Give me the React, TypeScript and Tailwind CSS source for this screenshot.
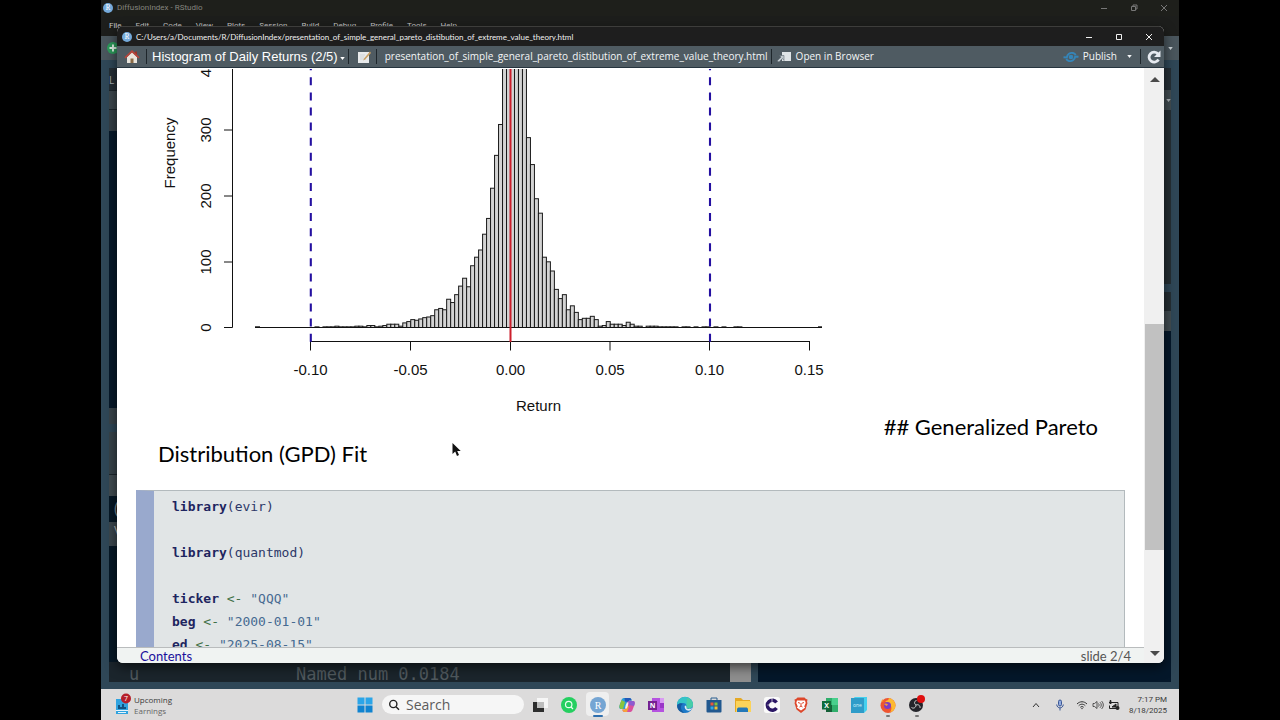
import type { ReactNode } from "react";

const MENUS = [
  "File",
  "Edit",
  "Code",
  "View",
  "Plots",
  "Session",
  "Build",
  "Debug",
  "Profile",
  "Tools",
  "Help",
];

const FILE_NAME =
  "presentation_of_simple_general_pareto_distibution_of_extreme_value_theory.html";

// Bin counts, 0.002 wide. The list starts at FIRST_BIN * 0.002.
const FIRST_BIN = -49;
const COUNTS = [
  1, 0, 1, 1, 1, 2, 1, 1, 1, 1, 2, 2, 1, 3, 3, 1, 2, 3, 5, 5, 5, 2, 7, 9, 12,
  11, 13, 15, 16, 18, 27, 29, 27, 43, 38, 50, 63, 75, 62, 94, 107, 118, 142,
  166, 212, 262, 309, 450, 450, 450, 450, 450, 450, 289, 248, 196, 174, 107,
  100, 86, 58, 44, 50, 27, 33, 23, 12, 14, 14, 17, 12, 2, 3, 9, 5, 5, 5, 3, 8,
  5, 2, 2, 0, 2, 2, 2, 1, 1, 1, 1, 1, 0, 1, 1, 0, 1, 0, 1, 1, 0, 1, 0, 1, 0, 0,
  1, 1,
];

const ZERO_X = 510.5;
const ZERO_Y = 327.5;
const BIN_W = 3.99;
const PX_PER_COUNT = 0.657;

function Histogram() {
  return (
    <svg
      viewBox="117 67 740 373"
      className="h-[373px] w-[740px] shrink-0"
      fontFamily='"Liberation Sans", Arial, sans-serif'
      fontSize="15"
      role="img"
      aria-label="Histogram of daily returns"
    >
      <clipPath id="plot">
        <rect x="117" y="69" width="740" height="374" />
      </clipPath>
      <g clipPath="url(#plot)">
        <g fill="#d3d3d3" stroke="#1a1a1a" strokeWidth="1">
          {COUNTS.map((count, i) =>
            count > 0 ? (
              <rect
                key={i}
                x={ZERO_X + (FIRST_BIN + i) * BIN_W}
                y={ZERO_Y - count * PX_PER_COUNT}
                width={BIN_W}
                height={count * PX_PER_COUNT}
              />
            ) : null,
          )}
        </g>
        <g stroke="#111" strokeWidth="1" fill="none">
          <path d="M255 327.5H822" />
          <path d="M255 326.8h5M818 326.8h4" />
          <path d="M232.5 60V327.5M224 130h8.500M224 196h8.500M224 262h8.500M224 327.500h8.500" />
          <path d="M310.500 341.500H809.500M310.500 341v9.500M410.500 341v9.500M510.500 341v9.500M610 341v9.500M709.500 341v9.500M809.500 341v9.500" />
        </g>
        <path d="M510.500 60V342" stroke="#cc1f2c" strokeWidth="2" />
        <path
          d="M310.800 341.700V60M710 341.700V60"
          stroke="#2410a0"
          strokeWidth="2.100"
          strokeDasharray="8 7.080"
        />
        <g textAnchor="middle" fill="#111">
          <text x="310.500" y="374.500">-0.10</text>
          <text x="410.500" y="374.500">-0.05</text>
          <text x="510.500" y="374.500">0.00</text>
          <text x="610" y="374.500">0.05</text>
          <text x="709.500" y="374.500">0.10</text>
          <text x="809" y="374.500">0.15</text>
          <text x="538.500" y="411">Return</text>
          <text transform="translate(211 327.500) rotate(-90)">0</text>
          <text transform="translate(211 262) rotate(-90)">100</text>
          <text transform="translate(211 196) rotate(-90)">200</text>
          <text transform="translate(211 130) rotate(-90)">300</text>
          <text transform="translate(211 73) rotate(-90)">4</text>
          <text transform="translate(174.500 153) rotate(-90)">Frequency</text>
        </g>
      </g>
    </svg>
  );
}

function RLogo({ className = "" }: { className?: string }) {
  return (
    <span
      className={`flex shrink-0 items-center justify-center rounded-full bg-[#75aadb] font-serif text-white ${className}`}
    >
      R
    </span>
  );
}

function Separator() {
  return <span className="h-[15px] w-px shrink-0 bg-[#1e262b]" />;
}

function Caret({ className = "" }: { className?: string }) {
  return (
    <svg viewBox="0 0 6 4" className={`h-[3px] w-[5px] ${className}`} fill="currentColor">
      <path d="M0 0h6L3 4z" />
    </svg>
  );
}

function WindowButtons({ restore = false }: { restore?: boolean }) {
  return (
    <div className="ml-auto flex items-center">
      <button aria-label="Minimize" className="flex w-[30px] justify-center">
        <svg viewBox="0 0 8 8" className="size-2" stroke="currentColor" fill="none">
          <path d="M1 4.500h6" />
        </svg>
      </button>
      <button aria-label="Maximize" className="flex w-[30px] justify-center">
        <svg viewBox="0 0 8 8" className="size-2" stroke="currentColor" fill="none">
          {restore ? (
            <path d="M1.500 2.500h4v4h-4zM3 2.500V1h4v4H5.500" />
          ) : (
            <path d="M1.500 1.500h5v5h-5z" />
          )}
        </svg>
      </button>
      <button aria-label="Close" className="flex w-[30px] justify-center">
        <svg viewBox="0 0 8 8" className="size-2" stroke="currentColor" fill="none">
          <path d="M1 1l6 6M7 1L1 7" />
        </svg>
      </button>
    </div>
  );
}

function RStudioBackdrop() {
  return (
    <div className="flex min-h-0 flex-1 flex-col bg-[#2f4757]">
      <div className="flex h-4 items-center bg-[#1e1f1b] pl-[2px] font-['Roboto',sans-serif] text-[8px] text-[#85857f]">
        <RLogo className="mr-1 size-[10px] text-[8px]" />
        <span>DiffusionIndex - RStudio</span>
        <div className="ml-auto text-[#777]">
          <WindowButtons restore />
        </div>
      </div>
      <div className="flex h-5 items-center gap-[14px] bg-[#1d1e1c] pl-2 font-['Roboto',sans-serif] text-[8px] text-[#c9c9c9]">
        {MENUS.map((menu) => (
          <button key={menu}>{menu}</button>
        ))}
      </div>
      <div className="flex h-6 items-center bg-[#4a565d] pl-[6px]">
        <svg viewBox="0 0 12 12" className="size-3">
          <circle cx="6" cy="6" r="6" fill="#2c9b5b" />
          <path d="M6 2.500v7M2.500 6h7" stroke="#dff2e6" strokeWidth="2" />
        </svg>
        <Caret className="mr-[6px] ml-auto text-[#cfd6da]" />
      </div>
      <div className="flex min-h-0 flex-1 gap-[7px] px-2 pt-2 pb-[7px]">
        <div className="flex flex-[643] flex-col bg-[#061826]">
          <div className="h-[22px] bg-[#252f36] pt-1 text-[10px] leading-4 text-[#aab1b5]">L</div>
          <div className="h-5 border-y border-[#1c262c] bg-[#3c474d]" />
          <div className="h-[21px] bg-[#343f46]" />
          <div className="h-[277px] bg-[#07192a]" />
          <div className="h-4 bg-[#39444b]" />
          <div className="h-2 bg-[#2f4757]" />
          <div className="h-[42px] bg-[#37434a]" />
          <div className="h-[22px] border-t border-[#1c262c] bg-[#414c51]" />
          <div className="h-[26px] pl-[5px] text-[16px] leading-6 text-[#7d8890]">(</div>
          <div className="h-6 bg-[#3b474e] pl-[5px] text-[13px] leading-4 text-[#b0b6ba]">V</div>
          <div className="mt-auto flex h-5 bg-[#1b252c]">
            <div className="flex flex-1 items-center self-end font-['DejaVu_Sans_Mono',monospace] text-[17px] leading-4 text-[#50595e]">
              <span className="w-[187px] pl-5">u</span>
              <span>Named num 0.0184</span>
            </div>
            <span className="h-full w-[21px] bg-[#8e8e8e]" />
          </div>
        </div>
        <div className="flex flex-[413] flex-col bg-[#04172a]">
          <div className="h-[22px] bg-[#252f36]" />
          <div className="flex h-5 items-center justify-end bg-[#414c51] text-[#aab1b5]">
            <Caret />
          </div>
          <div className="h-[174px] bg-[#252f34]" />
          <div className="h-2 bg-[#2f4757]" />
          <div className="h-[19px] bg-[#252f34]" />
          <div className="h-5 bg-[#414c51]" />
        </div>
      </div>
    </div>
  );
}

function PublishIcon() {
  return (
    <svg viewBox="0 0 16 12" className="h-3 w-4" fill="none" stroke="#3585b8">
      <circle cx="8" cy="6" r="2.300" fill="#3585b8" stroke="none" />
      <path d="M.500 6.200l3.300.300C4.300 3 7 1.300 10 2c1.400.400 2.200 1.100 2.700 2" strokeWidth="1.900" />
      <path d="M15.500 5.800l-3.300-.300C11.700 9 9 10.700 6 10c-1.400-.400-2.200-1.100-2.700-2" strokeWidth="1.900" />
    </svg>
  );
}

function Code({ name, value }: { name: string; value: string }) {
  return (
    <>
      <b className="text-[#1e2560]">{name}</b> <span className="text-[#3f7047]">&lt;-</span>{" "}
      <span className="text-[#466a91]">"{value}"</span>
      {"\n"}
    </>
  );
}

function Call({ arg }: { arg: string }) {
  return (
    <>
      <b className="text-[#1e2560]">library</b>({arg}){"\n\n"}
    </>
  );
}

function PresentationWindow() {
  return (
    <section className="absolute top-[26px] right-[15px] bottom-[26px] left-4 flex flex-col overflow-hidden rounded-md bg-white shadow-[0_4px_12px_rgba(0,0,0,0.6)]">
      <header className="flex h-5 shrink-0 items-center border-t border-[#3d3d3b] bg-[#1e1e1e] pl-[5px] font-['Lato',sans-serif] text-[8px] text-[#f0f0f0]">
        <RLogo className="mr-1 size-[10px] text-[8px]" />
        <span>C:/Users/a/Documents/R/DiffusionIndex/{FILE_NAME}</span>
        <WindowButtons />
      </header>

      <div className="flex h-[22px] shrink-0 items-center border-b border-[#26343e] bg-[#4f5b62] text-[10px] text-[#f4f6f7]">
        <button aria-label="Home" className="ml-[7px]">
          <svg viewBox="0 0 16 14" className="h-[14px] w-4">
            <path d="M3 7l5-5 5 5v6H3z" fill="#e9e4dc" />
            <path d="M6.500 8.500h3V13h-3z" fill="#8a6a45" />
            <path d="M11 1.500h2V5h-2z" fill="#9c3228" />
            <path d="M1 7.800L8 1.300l7 6.500" fill="none" stroke="#b5453c" strokeWidth="1.800" />
          </svg>
        </button>
        <span className="mr-[5px] ml-[6px] flex">
          <Separator />
        </span>
        <button className="flex items-center gap-[2px] font-['Liberation_Sans',Arial,sans-serif] text-[13px] leading-[18px] text-white">
          Histogram of Daily Returns (2/5)
          <Caret className="mt-1" />
        </button>
        <span className="mr-2 ml-[3px] flex">
          <Separator />
        </span>
        <button aria-label="Edit source">
          <svg viewBox="0 0 14 14" className="size-[14px]">
            <path d="M1 2h11v11H1z" fill="#e8eaeb" />
            <path d="M3 5h5M3 7h4M3 9h6" stroke="#d0d5d7" />
            <path d="M13 1.500L7 8.500l-.800 2 2-1L14 3z" fill="#c9a063" />
          </svg>
        </button>
        <span className="mr-2 ml-[5px] flex">
          <Separator />
        </span>
        <span>{FILE_NAME}</span>
        <span className="mr-[5px] ml-[3px] flex">
          <Separator />
        </span>
        <button className="flex items-center gap-[5px]">
          <svg viewBox="0 0 14 12" className="h-3 w-[14px]">
            <path d="M5 1h9v9H5z" fill="#dfe4e7" />
            <path d="M0 10l4-4-2-1.500h5v5L5.500 7.500 2 11z" fill="#c2cacf" stroke="#4f5b62" strokeWidth=".500" />
          </svg>
          Open in Browser
        </button>
        <button className="ml-auto flex items-center gap-1">
          <PublishIcon />
          Publish
          <Caret className="ml-[6px]" />
        </button>
        <span className="mr-[6px] ml-2 flex">
          <Separator />
        </span>
        <button aria-label="Refresh" className="mr-[3px]">
          <svg viewBox="0 0 14 14" className="size-[14px]" fill="none">
            <path d="M11.500 9.500A5 5 0 1 1 11 4" stroke="#e6eaf0" strokeWidth="2.800" />
            <path d="M13.500.500v6.500H7z" fill="#e6eaf0" />
          </svg>
        </button>
      </div>

      <div className="flex min-h-0 flex-1">
        <div className="flex min-w-0 flex-1 flex-col">
          <main className="min-h-0 flex-1 overflow-hidden font-['Lato',sans-serif] text-[22px] leading-[27px] text-black">
            <div className="-mt-px flex items-end justify-between pr-[46px]">
              <Histogram />
              <p className="whitespace-nowrap">## Generalized Pareto</p>
            </div>
            <p className="pl-[41px]">Distribution (GPD) Fit</p>
            <pre className="mt-[23px] mr-[19px] ml-[19px] border-t border-r border-l-[18px] border-t-[#b3babd] border-r-[#b3babd] border-l-[#99a9cd] bg-[#e1e5e6] pt-1 pb-6 pl-[18px] font-['DejaVu_Sans_Mono',monospace] text-[13px] leading-[23px] text-[#2c3768]">
              <Call arg="evir" />
              <Call arg="quantmod" />
              <Code name="ticker" value="QQQ" />
              <Code name="beg" value="2000-01-01" />
              <Code name="ed" value="2025-08-15" />
            </pre>
          </main>
          <footer className="flex h-4 shrink-0 items-center justify-between border-t border-[#b9bcbd] bg-[#f0f3f2] pr-[13px] pl-[23px] font-['Lato',sans-serif] text-[13px] leading-4">
            <a href="#contents" className="pt-px text-[#1a0f9c]">
              Contents
            </a>
            <span className="pt-px text-[#555]">slide 2/4</span>
          </footer>
        </div>
        <div className="flex w-5 shrink-0 flex-col items-center bg-[#f0f0f0] pl-px text-[#4a4a4a]">
          <svg viewBox="0 0 10 5" className="mt-[9px] h-[5px] w-[10px]" fill="currentColor">
            <path d="M0 5h10L5 0z" />
          </svg>
          <div className="flex-[241]" />
          <div className="w-full flex-[225] bg-[#c1c1c1]" />
          <div className="flex-[101]" />
          <svg viewBox="0 0 10 5" className="mb-[7px] h-[5px] w-[10px]" fill="currentColor">
            <path d="M0 0h10L5 5z" />
          </svg>
        </div>
      </div>
    </section>
  );
}

function AppIcon({
  label,
  active = false,
  running = false,
  children,
}: {
  label: string;
  active?: boolean;
  running?: boolean;
  children: ReactNode;
}) {
  return (
    <button
      aria-label={label}
      className="relative flex h-full w-[29px] shrink-0 items-center justify-center"
    >
      {active ? (
        <span className="absolute inset-x-[3px] top-[3px] bottom-1 rounded-sm bg-[#efefef]" />
      ) : null}
      <svg viewBox="0 0 16 16" className="relative size-4 overflow-visible">
        {children}
      </svg>
      {active ? (
        <span className="absolute bottom-[3px] h-[2px] w-[10px] rounded-full bg-[#2f6fae]" />
      ) : null}
      {running ? (
        <span className="absolute bottom-[3px] h-[2px] w-1 rounded-full bg-[#777]" />
      ) : null}
    </button>
  );
}

function Taskbar() {
  return (
    <nav className="flex h-[31px] shrink-0 items-center bg-[#dcdbdb] text-[#3a3a3a]">
      <button className="flex flex-1 items-center gap-1 pl-[13px] text-left text-[8px] leading-[11px]">
        <svg viewBox="0 0 16 20" className="h-5 w-4 overflow-visible">
          <path d="M2 4h12v15H2z" fill="#30a3df" />
          <path d="M4 14v-4h2v2h2V9h2v3h2v2z" fill="#12527f" />
          <path d="M2 15h12v1H2zM4 17h8v1H4z" fill="#e7f4fb" />
          <circle cx="12" cy="3.500" r="5" fill="#b51f2b" />
          <text x="12" y="6" fontSize="7" textAnchor="middle" fill="#fff">
            7
          </text>
        </svg>
        <span>
          Upcoming
          <br />
          <span className="text-[#666]">Earnings</span>
        </span>
      </button>

      <div className="flex h-full items-center">
        <AppIcon label="Start">
          <path d="M.500.500h7v7h-7zM8.500.500h7v7h-7z" fill="#2ba5e8" />
          <path d="M.500 8.500h7v7h-7zM8.500 8.500h7v7h-7z" fill="#0f83d0" />
        </AppIcon>
        <label className="mr-px ml-[3px] flex h-[19px] w-[142px] items-center gap-[6px] rounded-full bg-[#f6f6f6] pl-[6px]">
          <svg viewBox="0 0 12 12" className="size-3 shrink-0" fill="none" stroke="#222" strokeWidth="1.400">
            <circle cx="5.300" cy="5" r="3.600" />
            <path d="M8 7.800l3 3" />
          </svg>
          <input
            aria-label="Search"
            placeholder="Search"
            className="w-full min-w-0 bg-transparent text-[14px] outline-none placeholder:text-[#5c5c5c]"
          />
        </label>
        <AppIcon label="Task view">
          <path d="M1 5h11v10H1z" fill="#2d2d2d" />
          <path d="M5 1h11v10H5z" fill="#f6f6f6" />
          <path d="M5 5h7v6H5z" fill="#bdbdbd" />
        </AppIcon>
        <AppIcon label="Find">
          <circle cx="8" cy="8" r="8" fill="#25cf60" />
          <g fill="none" stroke="#e9fff0" strokeWidth="1.200">
            <circle cx="7.700" cy="7.500" r="3.200" />
            <path d="M10 10l2 2" />
          </g>
        </AppIcon>
        <AppIcon label="RStudio" active>
          <circle cx="8" cy="8" r="8" fill="#75a5d3" />
          <text x="8" y="11.500" fontSize="10" textAnchor="middle" fill="#fff" fontFamily='"Liberation Serif", serif'>
            R
          </text>
        </AppIcon>
        <AppIcon label="Copilot">
          <path d="M5.500 1h5c1.500 0 1.800 1 2.200 2.500H10L8 10c-.500 1.500-1 2-2.500 2H2C0 12 0 10 .500 8.500l2-5.500C3 1.500 4 1 5.500 1z" fill="#2c9fd8" />
          <path d="M2.500 3C1.500 6 0 9 .500 10.500 1 12 2 12 4 12l2-7z" fill="#8ac53e" />
          <path d="M5.500 1h5c1.500 0 1.800 1 2.200 2.500H10L9.500 5 6 4.500z" fill="#2459b8" />
          <path d="M10.500 15h-5c-1.500 0-1.800-1-2.200-2.500H6L8 6c.500-1.500 1-2 2.500-2H14c2 0 2 2 1.500 3.500l-2 5.500c-.500 1.500-1.500 2-3 2z" fill="#d9509d" />
          <path d="M5.500 15c-1.500 0-1.800-1-2.200-2.500H6l2-4 2 1-2 5.500z" fill="#f5a13a" />
          <path d="M9 4h5c2 0 2 2 1.500 3.500L15 9l-5-1z" fill="#8d5bd0" />
          <path d="M6.700 8L8 5.500h1.500L8.800 9l-1 2.500H6z" fill="#f0eef0" />
        </AppIcon>
        <AppIcon label="OneNote">
          <path d="M4 1h12v14H4z" fill="#b552e0" />
          <path d="M12 1h4v5h-4z" fill="#d99af2" />
          <path d="M12 6h4v5h-4z" fill="#9a36c8" />
          <path d="M0 4h9v9H0z" fill="#74208f" />
          <text x="4.500" y="11" fontSize="7" fontWeight="700" textAnchor="middle" fill="#fff">
            N
          </text>
        </AppIcon>
        <AppIcon label="Edge">
          <circle cx="8" cy="8" r="8" fill="#1c79c8" />
          <path d="M0 8a8 8 0 0 1 16-.500c0 2.500-2 4-4.500 4-1.500 0-2.500-.500-2.200-1.200.700-1.300.200-4.300-3-4.300C3 6 .800 7 0 8z" fill="#35c4c8" />
          <path d="M10 1c3.500.500 6 3.500 6 6.500 0 2.500-2 4-4.500 4-1.500 0-2.500-.500-2.200-1.200z" fill="#58d68d" opacity=".550" />
          <path d="M9.500 10.500c-.500 2 4 1.500 5.500.500-.500 2-2.500 3-4.500 2.500-2-.500-3.500-3-2.500-5 1 .200 1.500 1 1.500 2z" fill="#dcecf2" />
          <path d="M6 7C3 8 3 13 7.500 16c-5-.300-8-4.500-7.200-8C2 6 5 6 6 7z" fill="#155a9f" />
        </AppIcon>
        <AppIcon label="Store">
          <path d="M5 3V1h6v2" fill="none" stroke="#2b5e90" />
          <path d="M.500 3h15v11.500a1 1 0 0 1-1 1h-13a1 1 0 0 1-1-1z" fill="#21588f" />
          <path d="M4.500 5.500h3v3h-3z" fill="#e8573a" />
          <path d="M8.500 5.500h3v3h-3z" fill="#83c13c" />
          <path d="M4.500 9.500h3v3h-3z" fill="#2fa9e5" />
          <path d="M8.500 9.500h3v3h-3z" fill="#f3c132" />
        </AppIcon>
        <AppIcon label="File Explorer">
          <path d="M0 1h6l2 2h7v12H0z" fill="#e5a925" />
          <path d="M1 4h15v11H1z" fill="#fbd35a" />
          <path d="M2 15v-2.500c0-1.500 1-2 2-2h7c1 0 2 .500 2 2V15z" fill="#2478b8" />
        </AppIcon>
        <AppIcon label="Clipchamp">
          <rect width="16" height="16" rx="2.500" fill="#fafafa" />
          <path d="M12.500 5.500A5 5 0 1 0 12.500 11" fill="none" stroke="#2b1664" strokeWidth="3.400" />
          <path d="M8 1v4.500M3.500 8H7" stroke="#fafafa" strokeWidth=".700" />
        </AppIcon>
        <AppIcon label="Brave">
          <path d="M4.500.500h7L13 2l1.500.500L14 5l.500 1-2 6.500L8 16l-4.500-3.500-2-6.500L2 5l-.500-2.500L3 2z" fill="#dd472b" />
          <path d="M4 3.500h8l.700 2.500-1.500 3.500 1 1L8 13.500l-4.200-3 1-1L3.300 6z" fill="#fff" />
          <path d="M5 5.500l2 .700M11 5.500l-2 .700M8 6v3M6.500 10L8 9l1.500 1" stroke="#dd472b" fill="none" />
        </AppIcon>
        <AppIcon label="Excel">
          <path d="M4 1h12v14H4z" fill="#2fae6b" />
          <path d="M10 1h6v7h-6z" fill="#48cf8c" />
          <path d="M4 8h6v7H4z" fill="#155f37" />
          <path d="M0 4h9v8.500H0z" fill="#0f6b3a" />
          <text x="4.500" y="11" fontSize="7" fontWeight="700" textAnchor="middle" fill="#fff">
            X
          </text>
        </AppIcon>
        <AppIcon label="one">
          <path d="M3 0h13v13l-3 3z" fill="#45d0ee" />
          <path d="M0 1h13v15H0z" fill="#2f9cc9" />
          <text x="6.500" y="9.500" fontSize="5" textAnchor="middle" fill="#d7f3fc">
            one
          </text>
        </AppIcon>
        <AppIcon label="Firefox" running>
          <circle cx="8" cy="8.500" r="7.500" fill="#ee5530" />
          <path d="M9 1c4 1 6.500 4 6.500 7.500 0 3.500-2.500 6-5.500 7 2-3 3-9-5-11C7 3.500 9 3 9 1z" fill="#fdb92f" />
          <path d="M1 5l1.500-3 1 2L6 3.500z" fill="#fb9a2a" />
          <circle cx="7.500" cy="8.500" r="3.500" fill="#7d3cc4" />
          <path d="M4 7c1.500-1 3-.500 4 .500L6.500 9z" fill="#fb9a2a" />
        </AppIcon>
        <AppIcon label="OBS Studio" running>
          <circle cx="7" cy="8" r="7" fill="#24242a" />
          <path d="M7 8c-2-1-2-4 .500-4.500M7 8c2-1 4.500.500 4 3M7 8c0 2.500-2.500 4-4.500 2.500" stroke="#d4d4d4" strokeWidth="1" fill="none" />
          <circle cx="12" cy="2" r="4" fill="#e01010" />
        </AppIcon>
      </div>

      <div className="flex flex-1 items-center justify-end pr-3">
        <svg viewBox="0 0 8 6" className="mr-4 h-[6px] w-2" fill="none" stroke="#333">
          <path d="M1 5l3-3.500L7 5" />
        </svg>
        <svg viewBox="0 0 8 12" className="mr-3 h-3 w-2" fill="none" stroke="#3b5795">
          <rect x="2.500" y="1" width="3" height="6" rx="1.500" fill="#8fa9df" />
          <path d="M.700 5.500C1 10 7 10 7.300 5.500M4 9v2.500" />
        </svg>
        <svg viewBox="0 0 12 10" className="mr-1 h-[10px] w-3" fill="none" stroke="#333">
          <path d="M1 4c3-3 7-3 10 0M2.700 5.700c2-2 4.600-2 6.600 0M4.300 7.300c1-1 2.400-1 3.400 0" />
          <circle cx="6" cy="8.500" r=".700" fill="#333" stroke="none" />
        </svg>
        <svg viewBox="0 0 12 10" className="mr-1 h-[10px] w-3" fill="none" stroke="#333">
          <path d="M1 3.500h1.500L5 1.500v7L2.500 6.500H1zM6.500 3.500c.800 1 .800 2 0 3M8 2.200c1.700 1.600 1.700 4 0 5.600M9.500 1c2.400 2.400 2.400 5.600 0 8" strokeWidth=".800" />
        </svg>
        <svg viewBox="0 0 12 10" className="mr-[9px] h-[10px] w-3" fill="none" stroke="#222">
          <path d="M3.500 2.500H10v6H1.500v-3" />
          <path d="M4 7l4-3v3z" fill="#222" />
          <path d="M2.500 0v4M1 2.500h3" strokeWidth="1.400" />
          <circle cx="9.500" cy="8" r="2" fill="#222" stroke="none" />
        </svg>
        <time className="text-right font-['Roboto',sans-serif] text-[8px] leading-[11px]">
          7:17 PM
          <br />
          8/18/2025
        </time>
      </div>
    </nav>
  );
}

export default function App() {
  return (
    <div className="h-screen bg-black px-[101px] font-['Open_Sans','Noto_Sans',sans-serif]">
      <div className="flex h-full flex-col overflow-hidden">
        <div className="relative flex min-h-0 flex-1 flex-col">
          <RStudioBackdrop />
          <PresentationWindow />
        </div>
        <Taskbar />
      </div>
      <svg
        viewBox="0 0 9 14"
        className="pointer-events-none absolute top-[443px] left-[452px] h-[14px] w-[9px]"
      >
        <path d="M.500 0v11l2.700-2.500L5 13l2-.900-1.800-4H8.700z" fill="#111" />
      </svg>
    </div>
  );
}
